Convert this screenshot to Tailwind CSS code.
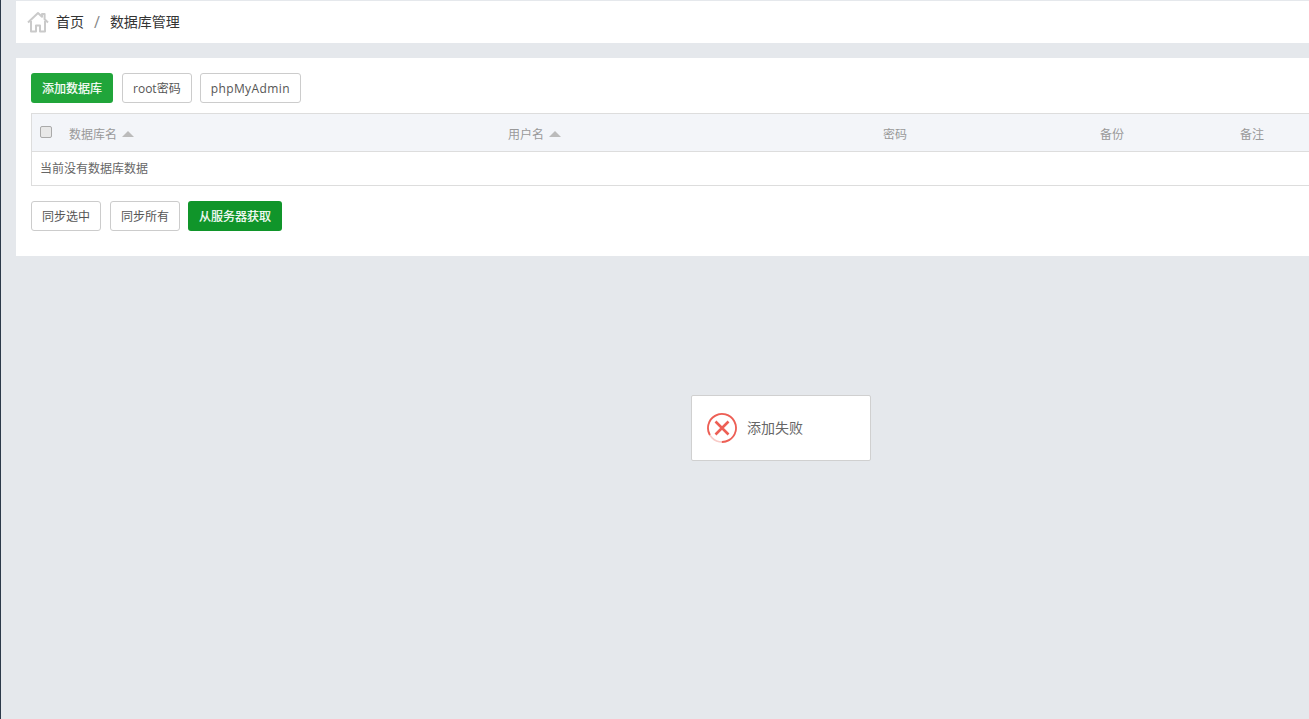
<!DOCTYPE html>
<html lang="en" class="overflow-hidden">
<head>
    <meta charset="UTF-8">
    <meta name="viewport" content="width=device-width, initial-scale=1.0">
    <title>数据库管理</title>
    <script src="https://cdn.jsdelivr.net/npm/@tailwindcss/browser@4"></script>
</head>
<body class="h-[719px] overflow-hidden bg-[#e5e8ec] font-['Open_Sans','Noto_Sans_CJK_SC',sans-serif] text-xs text-[#555]">
    <div class="relative h-full border-l border-l-[#2c3a4a] pl-[15px] pt-px">
        <nav class="flex h-[42px] items-center bg-white pl-[11px] text-sm text-[#333]">
            <svg class="mr-[7px] h-[22px] w-[22px]" viewBox="0 0 22 22" fill="none" stroke="#cacaca" stroke-width="2" stroke-linejoin="round">
                <path d="M1 11.5 11 2l4 3.8V3h2.6v5.3L21 11.5"/>
                <path d="M4 10v10.5h5v-6h4v6h5V10"/>
            </svg>
            <a href="#" class="text-[#333]">首页</a>
            <span class="mx-[10px] text-base leading-none text-[#888]">/</span>
            <span>数据库管理</span>
        </nav>

        <main class="mt-[15px] h-[198px] bg-white pl-[15px] pt-[15px]">
            <div class="flex gap-[9px]">
                <button class="h-[30px] rounded-[3px] bg-[#20a53a] px-[11px] pt-[2px] text-white [-webkit-text-stroke:0.2px_white]">添加数据库</button>
                <button class="h-[30px] rounded-[3px] border border-[#ccc] bg-white px-[10px] pt-[2px]">root密码</button>
                <button class="-ml-px h-[30px] rounded-[3px] border border-[#ccc] bg-white px-[10px] pt-[2px] tracking-[0.4px]">phpMyAdmin</button>
            </div>

            <table class="mt-[10px] w-[1400px] table-fixed border border-[#ddd] text-left">
                <colgroup>
                    <col class="w-[29px]">
                    <col class="w-[439px]">
                    <col class="w-[375px]">
                    <col class="w-[217px]">
                    <col class="w-[140px]">
                    <col>
                </colgroup>
                <thead class="bg-[#f3f5f9] text-[#999]">
                    <tr class="h-[38px] border-b border-[#ddd]">
                        <th class="pl-2 font-normal">
                            <span class="block h-3 w-3 rounded-[2px] border border-[#aaa] bg-[#e8e8e8] -mt-px"></span>
                        </th>
                        <th class="pl-[8.5px] pt-[5px] font-normal">
                            <span class="inline-flex items-center gap-[5px]">数据库名
                                <span class="-mt-[3px] h-0 w-0 border-x-[6px] border-b-[6px] border-x-transparent border-b-[#bbb]"></span>
                            </span>
                        </th>
                        <th class="pl-[8.5px] pt-[5px] font-normal">
                            <span class="inline-flex items-center gap-[5px]">用户名
                                <span class="-mt-[3px] h-0 w-0 border-x-[6px] border-b-[6px] border-x-transparent border-b-[#bbb]"></span>
                            </span>
                        </th>
                        <th class="pl-[8.5px] pt-[5px] font-normal">密码</th>
                        <th class="pl-[8.5px] pt-[5px] font-normal">备份</th>
                        <th class="pl-[8.5px] pt-[5px] font-normal">备注</th>
                    </tr>
                </thead>
                <tbody>
                    <tr class="h-[34px]">
                        <td colspan="6" class="pl-2 pt-px text-[#666]">当前没有数据库数据</td>
                    </tr>
                </tbody>
            </table>

            <div class="mt-[15px] flex gap-[9px]">
                <button class="h-[30px] rounded-[3px] border border-[#ccc] bg-white px-[10px] pt-[2px]">同步选中</button>
                <button class="h-[30px] rounded-[3px] border border-[#ccc] bg-white px-[10px] pt-[2px]">同步所有</button>
                <button class="-ml-px h-[30px] rounded-[3px] bg-[#10952a] px-[11px] pt-[2px] text-white [-webkit-text-stroke:0.2px_white]">从服务器获取</button>
            </div>
        </main>

        <!-- error toast -->
        <div class="absolute left-[691px] top-[395px] -ml-px flex h-[66px] w-[180px] items-center rounded-[2px] border border-[#d0d0d0] bg-white pl-[15px] text-sm text-[#666]">
            <svg class="mr-[10px] h-[30px] w-[30px] -mt-px" viewBox="0 0 30 30" fill="none" stroke="#ed5f55">
                <circle cx="15" cy="15" r="14" stroke="#f8cbc7" stroke-width="1.6"/>
                <circle cx="15" cy="15" r="14" stroke-width="1.8" stroke-dasharray="73 15" transform="rotate(150 15 15)"/>
                <path d="M8.5 8.5 21.5 21.5M21.5 8.5 8.5 21.5" stroke-width="2.6"/>
            </svg>
            <span>添加失败</span>
        </div>
    </div>
</body>
</html>
